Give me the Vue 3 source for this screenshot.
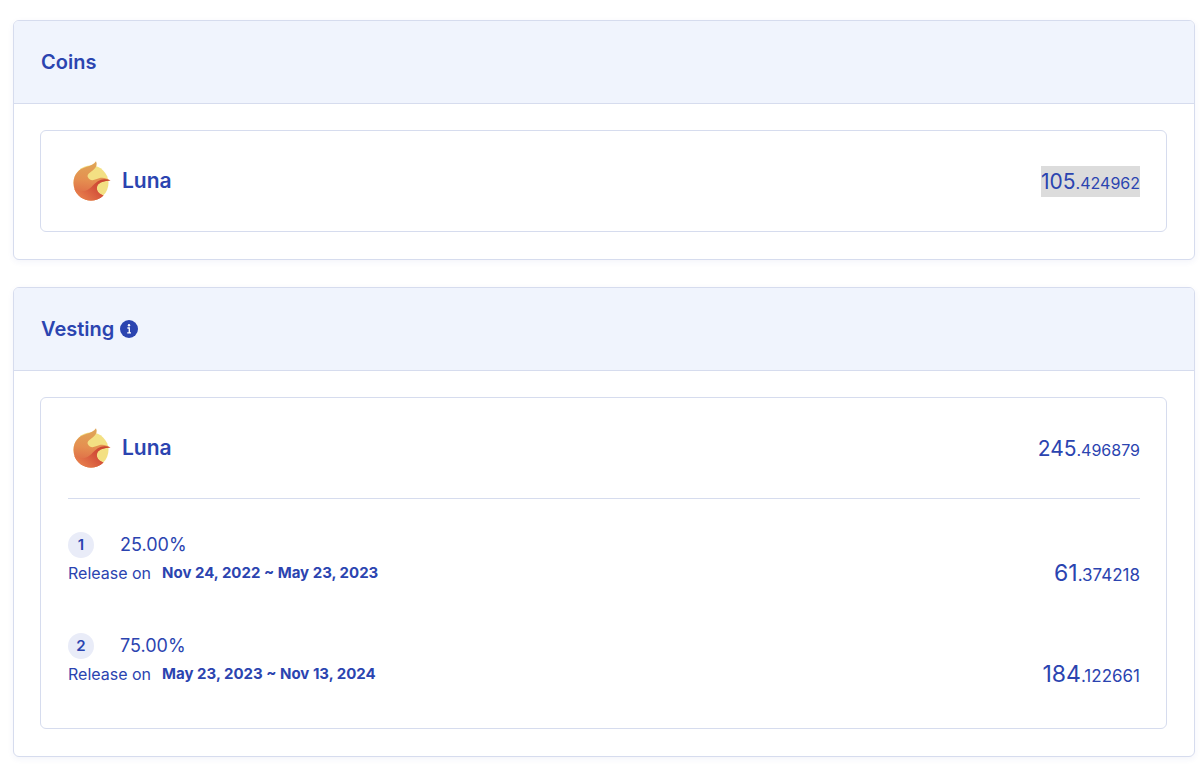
<script setup>
const coins = [{ name: 'Luna', whole: '105', decimals: '.424962', selected: true }]

const vesting = {
  name: 'Luna',
  whole: '245',
  decimals: '.496879',
  schedule: [
    { percent: '25.00%', period: 'Nov 24, 2022 ~ May 23, 2023', whole: '61', decimals: '.374218' },
    { percent: '75.00%', period: 'May 23, 2023 ~ Nov 13, 2024', whole: '184', decimals: '.122661' },
  ],
}
</script>

<template>
  <svg class="defs" width="0" height="0" aria-hidden="true">
    <defs>
      <linearGradient id="flame" x1="0.6" y1="0" x2="0.5" y2="1">
        <stop offset="0" stop-color="#dfa757" />
        <stop offset="0.5" stop-color="#e58f50" />
        <stop offset="1" stop-color="#dc6044" />
      </linearGradient>
      <linearGradient id="wave" x1="1" y1="0" x2="0" y2="0.6">
        <stop offset="0" stop-color="#c63f2d" />
        <stop offset="0.5" stop-color="#d4523a" />
        <stop offset="1" stop-color="#e77e4c" />
      </linearGradient>
      <symbol id="luna" viewBox="0 0 40 40">
        <circle cx="19" cy="22" r="17.5" fill="#f3e083" />
        <path
          fill="url(#flame)"
          d="M24 0.3C25.500 3.500 24.500 6.500 21 9.200C17 12.200 15 13.500 15.800 16C16.800 19 20.500 20 24 18.300C28.500 16.200 32.500 15.800 38.500 19.500C32 20 27.500 21.200 25.500 24.500C24 28 25 32 31.500 34.500C28 38 23.500 39.500 19 39.500C9.300 39.500 1.500 31.600 1.500 22C1.500 13 7 8 14 6C18.500 4.700 22 3.500 24 .3Z"
        />
        <path
          fill="url(#wave)"
          d="M38.500 19.500C32 20 27.500 21.200 25.500 24.500C24 28 25 32 31.500 34.500C28 38 23.500 39.500 19 39.500C11 39.500 4.500 34.500 2.200 27.500C8 32 14.500 31 19.500 26C25.500 19.500 30 16.500 38.500 19.500Z"
        />
      </symbol>
    </defs>
  </svg>

  <main class="page">
    <section class="card">
      <header class="card-header"><h2>Coins</h2></header>
      <div class="card-body">
        <article v-for="coin in coins" :key="coin.name" class="box">
          <div class="coin">
            <svg class="coin-icon" aria-hidden="true"><use href="#luna" /></svg>
            <h3>{{ coin.name }}</h3>
            <span class="amount" :class="{ selected: coin.selected }">{{ coin.whole }}<small>{{ coin.decimals }}</small></span>
          </div>
        </article>
      </div>
    </section>

    <section class="card">
      <header class="card-header">
        <h2>Vesting</h2>
        <button class="info" type="button" aria-label="About vesting">
          <svg viewBox="0 0 18 18" aria-hidden="true">
            <circle cx="9" cy="9" r="9" fill="#2b44b0" />
            <circle cx="9" cy="5.300" r="1.200" fill="#fff" />
            <path d="M7.400 8H9.300V12.600M7.200 12.800H11" fill="none" stroke="#fff" stroke-width="1.300" />
          </svg>
        </button>
      </header>
      <div class="card-body">
        <article class="box">
          <div class="coin">
            <svg class="coin-icon" aria-hidden="true"><use href="#luna" /></svg>
            <h3>{{ vesting.name }}</h3>
            <span class="amount">{{ vesting.whole }}<small>{{ vesting.decimals }}</small></span>
          </div>
          <ol class="schedule">
            <li v-for="(item, index) in vesting.schedule" :key="item.period">
              <div class="share">
                <span class="badge">{{ index + 1 }}</span>
                <span>{{ item.percent }}</span>
              </div>
              <div class="release">
                <span>Release on</span>
                <strong>{{ item.period }}</strong>
                <span class="amount large">{{ item.whole }}<small>{{ item.decimals }}</small></span>
              </div>
            </li>
          </ol>
        </article>
      </div>
    </section>
  </main>
</template>

<style>
body {
  background: #fff;
}
</style>

<style scoped>
.defs {
  position: absolute;
}

.page {
  display: flex;
  flex-direction: column;
  gap: 27px;
  padding: 20px 5px 9px 13px;
  color: #2b44b0;
  font-family: Inter, 'Liberation Sans', sans-serif;
}

.card {
  border: 1px solid #d6dcee;
  border-radius: 6px;
  background: #fff;
  box-shadow: 0 2px 6px rgba(43, 68, 176, 0.06);
}

.card-header {
  display: flex;
  align-items: center;
  gap: 6px;
  padding: 28px 27px;
  border-bottom: 1px solid #d6dcee;
  border-radius: 5px 5px 0 0;
  background: #f0f4fd;
}

h2,
h3 {
  margin: 0;
  font-size: 20px;
  font-weight: 600;
  line-height: 26px;
}

h3 {
  font-size: 21px;
}

.info {
  width: 18px;
  height: 18px;
  padding: 0;
  border: 0;
  background: none;
}

.info svg {
  display: block;
  width: 18px;
  height: 18px;
}

.card-body {
  padding: 26px 27px 27px 26px;
}

.box {
  padding: 0 26px 0 27px;
  border: 1px solid #d6dcee;
  border-radius: 6px;
}

.coin {
  display: flex;
  align-items: center;
  padding: 30px 0;
}

.coin-icon {
  width: 40px;
  height: 40px;
  margin: 0 10px 0 4px;
}

.amount {
  margin-left: auto;
  font-size: 21px;
  line-height: 31px;
}

.amount small {
  font-size: 16px;
  line-height: 1;
}

.amount.large {
  font-size: 23px;
  line-height: 30px;
}

.amount.large small {
  font-size: 17px;
}

.selected {
  background: #dcdcdc;
}

.schedule {
  display: flex;
  flex-direction: column;
  gap: 45px;
  margin: 0;
  padding: 33px 0 39px;
  border-top: 1px solid #d6dcee;
  list-style: none;
}

.share {
  display: flex;
  align-items: center;
  gap: 26px;
  font-size: 18px;
  line-height: 26px;
}

.badge {
  width: 26px;
  border-radius: 50%;
  background: #e9ecf8;
  font-size: 15px;
  font-weight: 600;
  text-align: center;
}

.release {
  display: flex;
  align-items: center;
  gap: 11px;
  font-size: 16px;
  line-height: 30px;
}

.release strong {
  font-size: 15px;
  font-weight: 700;
}
</style>
